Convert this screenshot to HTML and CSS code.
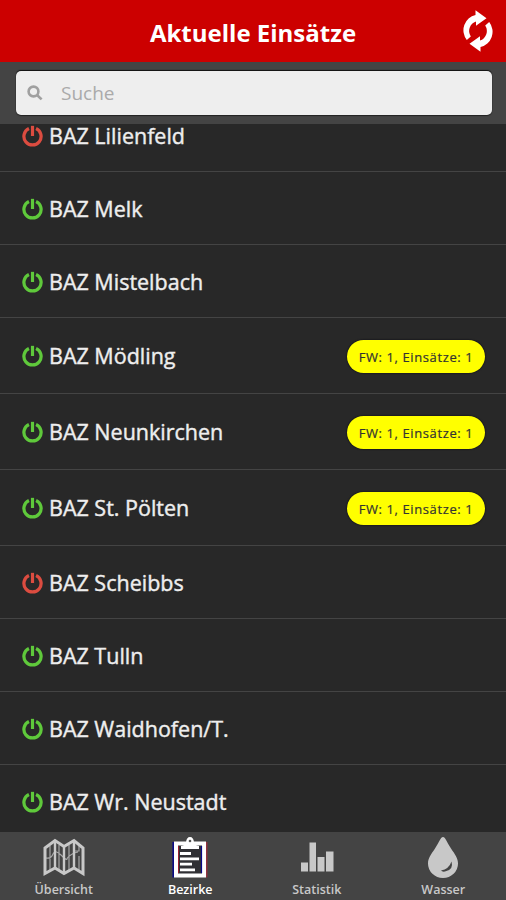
FILE: index.html
```html
<!DOCTYPE html>
<html lang="de">
<head>
<meta charset="utf-8">
<title>Aktuelle Einsätze</title>
<link rel="stylesheet" href="styles.css">
</head>
<body>
<svg class="defs" width="0" height="0">
  <symbol id="power" viewBox="0 0 20 21">
    <path d="M6.6 3.4A8.2 8.2 0 1 0 13.4 3.4" fill="none" stroke="currentColor" stroke-width="3.1"/>
    <path d="M10 .8V10.5" fill="none" stroke="currentColor" stroke-width="3"/>
  </symbol>
</svg>
<div class="app">
  <header class="header">
    <h1 class="title">Aktuelle Einsätze</h1>
    <svg class="refresh" viewBox="0 0 32 42">
      <path d="M4.800 30A15 15.500 0 0 1 13.500 5V.3L24.500 8.300 14 15.800V11.500A10 10 0 0 0 8.800 26.500Z"/>
      <path d="M27.200 12A15 15.500 0 0 1 18.500 37V41.700L7.500 33.700 18 26.200V30.500A10 10 0 0 0 23.200 15.500Z"/>
    </svg>
  </header>
  <div class="searchbar">
    <label class="search">
      <svg class="lens" viewBox="0 0 16 16"><circle cx="6.5" cy="6.5" r="4.9"/><path d="M10 10L14.6 14.4"/></svg>
      <span class="placeholder">Suche</span>
    </label>
  </div>
  <ul class="list">
    <li class="row off"><svg class="power"><use href="#power"/></svg><span class="name">BAZ Lilienfeld</span></li>
    <li class="row"><svg class="power"><use href="#power"/></svg><span class="name">BAZ Melk</span></li>
    <li class="row"><svg class="power"><use href="#power"/></svg><span class="name">BAZ Mistelbach</span></li>
    <li class="row active"><svg class="power"><use href="#power"/></svg><span class="name">BAZ Mödling</span><span class="badge">FW: 1, Einsätze: 1</span></li>
    <li class="row active"><svg class="power"><use href="#power"/></svg><span class="name">BAZ Neunkirchen</span><span class="badge">FW: 1, Einsätze: 1</span></li>
    <li class="row active"><svg class="power"><use href="#power"/></svg><span class="name">BAZ St. Pölten</span><span class="badge">FW: 1, Einsätze: 1</span></li>
    <li class="row off"><svg class="power"><use href="#power"/></svg><span class="name">BAZ Scheibbs</span></li>
    <li class="row"><svg class="power"><use href="#power"/></svg><span class="name">BAZ Tulln</span></li>
    <li class="row"><svg class="power"><use href="#power"/></svg><span class="name">BAZ Waidhofen/T.</span></li>
    <li class="row"><svg class="power"><use href="#power"/></svg><span class="name">BAZ Wr. Neustadt</span></li>
  </ul>
  <nav class="tabs">
    <a class="tab">
      <svg class="icon" viewBox="0 0 42 42">
        <path d="M2 11L12 3.5 21 9.5 31 3.5 40 11V36.500L31 31 21 36.500 12 31 2 36.500Z" fill="none" stroke="currentColor" stroke-width="3"/>
        <path d="M12 4V31M21 10V36M31 4V31" stroke="currentColor" stroke-width="2.4"/>
        <path d="M3 21Q8 22 10 17T18 18 24 22 31 16L35 15M7 9V33M16 8V33M26 8V33M36 9V14H32M36 19V33" fill="none" stroke="currentColor" stroke-width="1.200" opacity=".75"/>
      </svg>
      <span class="label">Übersicht</span>
    </a>
    <a class="tab selected">
      <svg class="icon" viewBox="0 0 42 42">
        <path d="M4.200 5V40.500" stroke="#08088a" stroke-width="1.500"/><path d="M37.800 5V40.500" stroke="#b52b3d" stroke-width="1"/>
        <path d="M7 6.500H35V38.500H7Z" fill="#303034" stroke="currentColor" stroke-width="4"/>
        <path d="M9.500 9V36" stroke="#9b2031" stroke-width="1"/><path d="M32.500 9V36" stroke="#08088a" stroke-width="1.200"/>
        <path d="M12 12V9Q16.500 8 17 5.500 17.500 0 21 0T25 5.500Q25.500 8 30 9V12Z" fill="currentColor"/><circle cx="21" cy="4" r="1.300" fill="#555"/>
        <path d="M11 16.500H22M11 21.800H30M11 27.200H23M11 32.800H26" stroke="currentColor" stroke-width="2.800"/>
      </svg>
      <span class="label">Bezirke</span>
    </a>
    <a class="tab">
      <svg class="icon" viewBox="0 0 42 42">
        <path d="M5 25.500H12V34.500H5ZM13.500 5.500H20V34.500H13.500ZM21.500 20H28.500V34.500H21.500ZM30 14.500H37.500V34.500H30Z" fill="currentColor"/>
      </svg>
      <span class="label">Statistik</span>
    </a>
    <a class="tab">
      <svg class="icon" viewBox="0 0 42 42">
        <path d="M21 0C23.500 0 24 4 29 11.500 33 17.500 36 21 36 26.500A15 14.500 0 0 1 6 26.500C6 21 9 17.500 13 11.500 18 4 18.500 0 21 0Z" fill="currentColor"/>
        <path d="M19 33.500Q27 32 29.500 24.500 32 33 23 34.500 20 35 19 33.500Z" fill="#444"/>
      </svg>
      <span class="label">Wasser</span>
    </a>
  </nav>
</div>
</body>
</html>
```
FILE: styles.css
```css
* { box-sizing: border-box; }
body { margin: 0; background: #282828; font-family: "Open Sans", "Noto Sans", sans-serif; }
.defs { display: none; }
.app { width: 506px; height: 900px; display: flex; flex-direction: column; overflow: hidden; }

.header { position: relative; height: 62px; flex: none; background: #c00; color: #fff; display: flex; align-items: center; justify-content: center; padding-top: 3px; }
.title { margin: 0; font-size: 24px; line-height: 34px; font-weight: 700; }
.refresh { position: absolute; right: 12px; top: 10px; width: 32px; height: 42px; fill: #fff; }

.searchbar { height: 62px; flex: none; background: #444; padding: 9px 14px 8px 16px; }
.search { display: flex; align-items: center; height: 44px; background: #eee; border-radius: 5px; box-shadow: 0 -1px 1px #111, 0 1px 1px #222; padding-left: 11px; }
.lens { width: 16px; height: 16px; fill: none; stroke: #a0a0a0; stroke-width: 2.6; }
.placeholder { margin-left: 18px; font-size: 19px; color: #aaa; }

.list { flex: 1; min-height: 0; margin: 0; padding: 0; list-style: none; overflow: hidden; }
.row { display: flex; align-items: center; height: 73px; padding: 2px 21px 0 22px; border-bottom: 1px solid #444; color: #eee; }
.row:first-child { margin-top: -25px; }
.row.active { height: 76px; padding-top: 1px; }
.power { width: 21px; height: 22px; margin-top: -1px; color: #5fc93b; }
.off .power { color: #dc4c40; }
.name { margin-left: 6px; font-size: 21.500px; line-height: 20px; -webkit-text-stroke: .4px #eee; white-space: nowrap; }
.badge { margin-left: auto; width: 138px; height: 33px; line-height: 34px; border-radius: 17px; background: #ff0; color: #333; font-size: 13px; font-weight: 500; letter-spacing: .6px; -webkit-text-stroke: .2px #333; text-align: center; white-space: nowrap; box-shadow: 0 0 2px #001; }

.tabs { height: 68px; flex: none; display: grid; grid-template-columns: repeat(4, 1fr); background: #444; }
.tab { display: flex; flex-direction: column; align-items: center; padding: 5px 0 0 1px; color: #c8c8c8; }
.icon { width: 42px; height: 42px; }
.label { font-size: 12.500px; line-height: 16px; margin-top: 3px; font-weight: 600; }
.selected { color: #fff; }
```
